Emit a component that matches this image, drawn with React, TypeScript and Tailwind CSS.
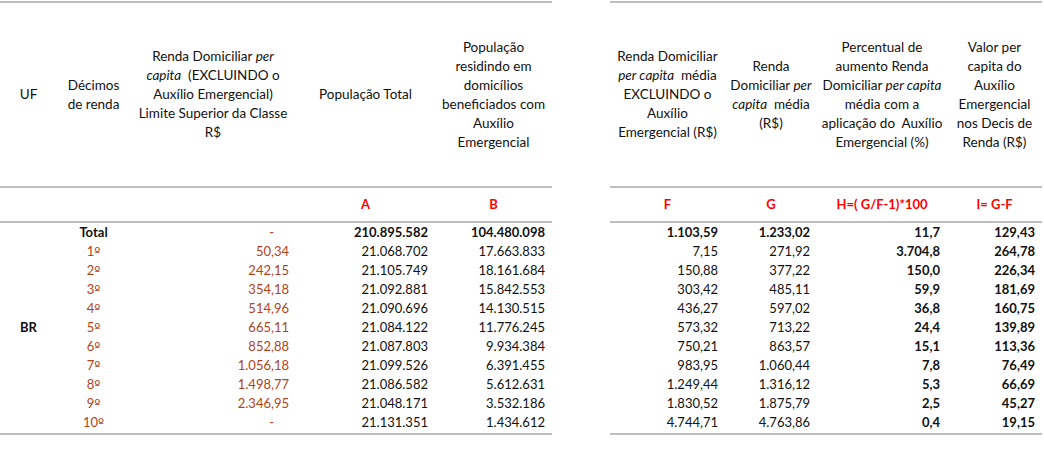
const BROWN = 'text-[#b0431c]'

const rows = [
  { d: 'Total', lim: '-', pop: '210.895.582', ben: '104.480.098', f: '1.103,59', g: '1.233,02', h: '11,7', i: '129,43' },
  { d: '1', lim: '50,34', pop: '21.068.702', ben: '17.663.833', f: '7,15', g: '271,92', h: '3.704,8', i: '264,78' },
  { d: '2', lim: '242,15', pop: '21.105.749', ben: '18.161.684', f: '150,88', g: '377,22', h: '150,0', i: '226,34' },
  { d: '3', lim: '354,18', pop: '21.092.881', ben: '15.842.553', f: '303,42', g: '485,11', h: '59,9', i: '181,69' },
  { d: '4', lim: '514,96', pop: '21.090.696', ben: '14.130.515', f: '436,27', g: '597,02', h: '36,8', i: '160,75' },
  { d: '5', lim: '665,11', pop: '21.084.122', ben: '11.776.245', f: '573,32', g: '713,22', h: '24,4', i: '139,89' },
  { d: '6', lim: '852,88', pop: '21.087.803', ben: '9.934.384', f: '750,21', g: '863,57', h: '15,1', i: '113,36' },
  { d: '7', lim: '1.056,18', pop: '21.099.526', ben: '6.391.455', f: '983,95', g: '1.060,44', h: '7,8', i: '76,49' },
  { d: '8', lim: '1.498,77', pop: '21.086.582', ben: '5.612.631', f: '1.249,44', g: '1.316,12', h: '5,3', i: '66,69' },
  { d: '9', lim: '2.346,95', pop: '21.048.171', ben: '3.532.186', f: '1.830,52', g: '1.875,79', h: '2,5', i: '45,27' },
  { d: '10', lim: '-', pop: '21.131.351', ben: '1.434.612', f: '4.744,71', g: '4.763,86', h: '0,4', i: '19,15' },
]

const line = 'h-[2px] bg-[#bfbfbf]'

function Head({ children }: { children: React.ReactNode }) {
  return <div className="flex items-center justify-center text-center text-[13.5px] leading-[19px]">{children}</div>
}

function Sub({ children }: { children?: React.ReactNode }) {
  return <div className="flex items-center justify-center font-bold text-[#ff0000]">{children}</div>
}

function Decile({ d }: { d: string }) {
  if (d === 'Total') return <>{d}</>
  return (
    <>
      {d}
      <span style={{ fontFamily: '"DejaVu Sans", sans-serif' }} className="text-[13px]">
        º
      </span>
    </>
  )
}

export default function App() {
  return (
    <div
      className="flex h-[450px] w-[1044px] gap-[58px] bg-white pt-[1px] text-[13px] text-[#111]"
      style={{ fontFamily: 'Lato, "Liberation Sans", sans-serif' }}
    >
      {/* left block */}
      <div className="w-[552px]">
        <div className={line} />
        <div className="grid h-[183px] grid-cols-[57px_73px_166px_139px_117px]">
          <Head>UF</Head>
          <Head>
            Décimos
            <br />
            de renda
          </Head>
          <Head>
            <span>
              Renda Domiciliar <i>per</i>
              <br />
              <i>capita</i>&nbsp; (EXCLUINDO o
              <br />
              Auxílio Emergencial)
              <br />
              Limite Superior da Classe
              <br />
              R$
            </span>
          </Head>
          <Head>População Total</Head>
          <Head>
            <span>
              População
              <br />
              residindo em
              <br />
              domicílios
              <br />
              beneficiados com
              <br />
              Auxílio
              <br />
              Emergencial
            </span>
          </Head>
        </div>
        <div className={line} />
        <div className="grid h-[33px] grid-cols-[57px_73px_166px_139px_117px]">
          <Sub />
          <Sub />
          <Sub />
          <Sub>A</Sub>
          <Sub>B</Sub>
        </div>
        <div className={line} />
        <div className="grid h-[210px] grid-cols-[57px_73px_166px_139px_117px] grid-rows-[repeat(11,19px)] content-start">
          <div className="row-span-11 flex items-center justify-center font-bold">BR</div>
          {rows.map((r, idx) => {
            const total = idx === 0
            return [
              <div key={r.d + 'd'} className={`text-center leading-[19px] ${total ? 'font-bold' : BROWN}`}>
                <Decile d={r.d} />
              </div>,
              <div
                key={r.d + 'l'}
                className={`text-right leading-[19px] ${BROWN} ${r.lim === '-' ? 'pr-[22px]' : 'pr-[7px]'}`}
              >
                {r.lim}
              </div>,
              <div key={r.d + 'p'} className={`pr-[7px] text-right leading-[19px] ${total ? 'font-bold' : ''}`}>
                {r.pop}
              </div>,
              <div key={r.d + 'b'} className={`pr-[7px] text-right leading-[19px] ${total ? 'font-bold' : ''}`}>
                {r.ben}
              </div>,
            ]
          })}
        </div>
        <div className={line} />
      </div>

      {/* right block */}
      <div className="w-[432px]">
        <div className={line} />
        <div className="grid h-[183px] grid-cols-[115px_92px_130px_95px]">
          <Head>
            <span>
              Renda Domiciliar
              <br />
              <i>per capita</i>&nbsp; média
              <br />
              EXCLUINDO o
              <br />
              Auxílio
              <br />
              Emergencial (R$)
            </span>
          </Head>
          <Head>
            <span>
              Renda
              <br />
              Domiciliar <i>per</i>
              <br />
              <i>capita</i>&nbsp; média
              <br />
              (R$)
            </span>
          </Head>
          <Head>
            <span>
              Percentual de
              <br />
              aumento Renda
              <br />
              Domiciliar <i>per capita</i>
              <br />
              média com a
              <br />
              aplicação do&nbsp; Auxílio
              <br />
              Emergencial (%)
            </span>
          </Head>
          <Head>
            <span>
              Valor per
              <br />
              capita do
              <br />
              Auxílio
              <br />
              Emergencial
              <br />
              nos Decis de
              <br />
              Renda (R$)
            </span>
          </Head>
        </div>
        <div className={line} />
        <div className="grid h-[33px] grid-cols-[115px_92px_130px_95px]">
          <Sub>F</Sub>
          <Sub>G</Sub>
          <Sub>H=( G/F-1)*100</Sub>
          <Sub>I= G-F</Sub>
        </div>
        <div className={line} />
        <div className="grid h-[210px] grid-cols-[115px_92px_130px_95px] grid-rows-[repeat(11,19px)] content-start">
          {rows.map((r, idx) => {
            const total = idx === 0
            return [
              <div key={r.d + 'f'} className={`pr-[7px] text-right leading-[19px] ${total ? 'font-bold' : ''}`}>
                {r.f}
              </div>,
              <div key={r.d + 'g'} className={`pr-[7px] text-right leading-[19px] ${total ? 'font-bold' : ''}`}>
                {r.g}
              </div>,
              <div key={r.d + 'h'} className="pr-[7px] text-right font-bold leading-[19px]">
                {r.h}
              </div>,
              <div key={r.d + 'i'} className="pr-[7px] text-right font-bold leading-[19px]">
                {r.i}
              </div>,
            ]
          })}
        </div>
        <div className={line} />
      </div>
    </div>
  )
}
